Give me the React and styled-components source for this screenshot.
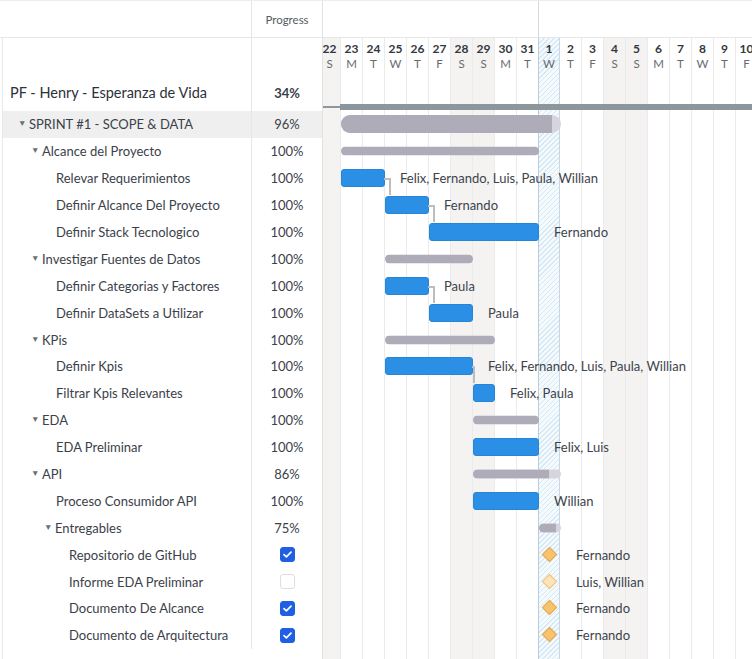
import React from 'react';
import styled, { createGlobalStyle } from 'styled-components';

const ROW_H = 26.9;
const TALL_H = 73;
const COL_W = 22;
const GRID_SHIFT = -4;

const GlobalStyle = createGlobalStyle`
  html, body { margin: 0; padding: 0; background: #fff; }
  body {
    font-family: Lato, "Open Sans", sans-serif;
    color: #3b4149;
    -webkit-font-smoothing: antialiased;
  }
`;

// day columns of the timeline: [number, letter, weekend, today]
const days = [
  [22, 'S', true], [23, 'M'], [24, 'T'], [25, 'W'], [26, 'T'], [27, 'F'],
  [28, 'S', true], [29, 'S', true], [30, 'M'], [31, 'T'], [1, 'W', false, true],
  [2, 'T'], [3, 'F'], [4, 'S', true], [5, 'S', true], [6, 'M'], [7, 'T'],
  [8, 'W'], [9, 'T'], [10, 'F'],
];

const dayX = d => d * COL_W + GRID_SHIFT;

const rows = [
  { name: 'SPRINT #1 - SCOPE & DATA', level: 1, group: true, pct: '96%', active: true,
    bar: { kind: 'sprint', from: 1, to: 11, done: 0.96 } },
  { name: 'Alcance del Proyecto', level: 2, group: true, pct: '100%',
    bar: { kind: 'summary', from: 1, to: 10, done: 1 } },
  { name: 'Relevar Requerimientos', level: 3, pct: '100%',
    bar: { kind: 'task', from: 1, to: 3, link: 6 }, label: 'Felix, Fernando, Luis, Paula, Willian' },
  { name: 'Definir Alcance Del Proyecto', level: 3, pct: '100%',
    bar: { kind: 'task', from: 3, to: 5, link: 6 }, label: 'Fernando' },
  { name: 'Definir Stack Tecnologico', level: 3, pct: '100%',
    bar: { kind: 'task', from: 5, to: 10 }, label: 'Fernando' },
  { name: 'Investigar Fuentes de Datos', level: 2, group: true, pct: '100%',
    bar: { kind: 'summary', from: 3, to: 7, done: 1 } },
  { name: 'Definir Categorias y Factores', level: 3, pct: '100%',
    bar: { kind: 'task', from: 3, to: 5, link: 6 }, label: 'Paula' },
  { name: 'Definir DataSets a Utilizar', level: 3, pct: '100%',
    bar: { kind: 'task', from: 5, to: 7 }, label: 'Paula' },
  { name: 'KPis', level: 2, group: true, pct: '100%',
    bar: { kind: 'summary', from: 3, to: 8, done: 1 } },
  { name: 'Definir Kpis', level: 3, pct: '100%',
    bar: { kind: 'task', from: 3, to: 7, link: 2 }, label: 'Felix, Fernando, Luis, Paula, Willian' },
  { name: 'Filtrar Kpis Relevantes', level: 3, pct: '100%',
    bar: { kind: 'task', from: 7, to: 8 }, label: 'Felix, Paula' },
  { name: 'EDA', level: 2, group: true, pct: '100%',
    bar: { kind: 'summary', from: 7, to: 10, done: 1 } },
  { name: 'EDA Preliminar', level: 3, pct: '100%',
    bar: { kind: 'task', from: 7, to: 10 }, label: 'Felix, Luis' },
  { name: 'API', level: 2, group: true, pct: '86%',
    bar: { kind: 'summary', from: 7, to: 11, done: 0.86 } },
  { name: 'Proceso Consumidor API', level: 3, pct: '100%',
    bar: { kind: 'task', from: 7, to: 10 }, label: 'Willian' },
  { name: 'Entregables', level: 3, group: true, pct: '75%',
    bar: { kind: 'summary', from: 10, to: 11, done: 0.75 } },
  { name: 'Repositorio de GitHub', level: 4, check: true,
    bar: { kind: 'milestone', from: 10, to: 11, done: 1 }, label: 'Fernando' },
  { name: 'Informe EDA Preliminar', level: 4, check: false,
    bar: { kind: 'milestone', from: 10, to: 11, done: 0 }, label: 'Luis, Willian' },
  { name: 'Documento De Alcance', level: 4, check: true,
    bar: { kind: 'milestone', from: 10, to: 11, done: 1 }, label: 'Fernando' },
  { name: 'Documento de Arquitectura', level: 4, check: true,
    bar: { kind: 'milestone', from: 10, to: 11, done: 1 }, label: 'Fernando' },
];

/* ---------- page ---------- */

const Page = styled.div`
  display: flex;
  width: 752px;
  height: 659px;
  overflow: hidden;
  border-top: 1px solid #ececec;
  box-sizing: border-box;
`;

/* ---------- left table ---------- */

const Table = styled.div`
  width: 323px;
  flex: none;
  display: flex;
  flex-direction: column;
  border-right: 1px solid #e2e2e2;
  box-sizing: border-box;
`;

const HeadRow = styled.div`
  display: grid;
  grid-template-columns: 252px 1fr;
  height: 36px;
  border-bottom: 1px solid #e6e6e6;
`;

const HeadCell = styled.div`
  display: flex;
  align-items: center;
  justify-content: center;
  font-size: 11.5px;
  color: #555b62;
  border-right: ${p => (p.$divider ? '1px solid #e6e6e6' : 'none')};
`;

const Body = styled.div`
  flex: 1;
  margin-left: 2px;
  border-left: 1px solid #e8e8e8;
`;

const Row = styled.div`
  display: grid;
  grid-template-columns: 249px 1fr;
  height: ${p => (p.$tall ? `${TALL_H}px` : `${ROW_H}px`)};
  background: ${p => (p.$active ? '#efefef' : 'transparent')};
  font-size: 13px;
`;

const NameCell = styled.div`
  display: flex;
  align-items: ${p => (p.$tall ? 'flex-end' : 'center')};
  padding-left: ${p => p.$indent}px;
  padding-bottom: ${p => (p.$tall ? '10px' : '0')};
  border-right: 1px solid #e6e6e6;
  white-space: nowrap;
  font-size: ${p => (p.$tall ? '14.5px' : '13px')};
  color: ${p => (p.$tall ? '#2c3138' : '#3b4149')};
`;

const Caret = styled.span`
  display: inline-block;
  width: 11px;
  font-size: 8.5px;
  color: #6b7077;
  transform: translateY(-1px);
`;

const PctCell = styled.div`
  display: flex;
  align-items: ${p => (p.$tall ? 'flex-end' : 'center')};
  justify-content: center;
  padding-bottom: ${p => (p.$tall ? '10px' : '0')};
  font-size: 13px;
  font-weight: ${p => (p.$tall ? 700 : 400)};
  color: #3b4149;
`;

const Check = styled.span`
  width: 15px;
  height: 15px;
  border-radius: 3px;
  box-sizing: border-box;
  display: flex;
  align-items: center;
  justify-content: center;
  background: ${p => (p.$on ? '#1e5fe4' : '#fff')};
  border: 1px solid ${p => (p.$on ? '#1e5fe4' : '#dedede')};
`;

/* ---------- gantt ---------- */

const Gantt = styled.div`
  flex: 1;
  display: flex;
  flex-direction: column;
  overflow: hidden;
`;

const MonthBar = styled.div`
  height: 36px;
  flex: none;
  border-bottom: 1px solid #e6e6e6;
  display: flex;
`;

const MonthCell = styled.div`
  width: ${p => p.$w}px;
  flex: none;
  border-right: 1px solid #d8d8d8;
  box-sizing: border-box;
`;

const Canvas = styled.div`
  position: relative;
  flex: 1;
`;

const DayGrid = styled.div`
  position: absolute;
  top: 0;
  bottom: 0;
  left: ${GRID_SHIFT}px;
  display: flex;
`;

const DayCol = styled.div`
  width: ${COL_W}px;
  flex: none;
  box-sizing: border-box;
  display: flex;
  flex-direction: column;
  align-items: center;
  padding-top: 3px;
  border-right: 1px solid ${p => (p.$today ? '#c7d7e4' : '#ebebeb')};
  border-left: ${p => (p.$today ? '1px solid #b9ccdc' : 'none')};
  margin-left: ${p => (p.$today ? '-1px' : '0')};
  background: ${p =>
    p.$today
      ? 'repeating-linear-gradient(135deg, #d6e8f5 0 1px, #f5fafd 1px 3.5px)'
      : p.$weekend
        ? '#f4f3f2'
        : '#fff'};
`;

const DayNum = styled.span`
  font-size: 12px;
  font-weight: 700;
  color: #33383e;
  line-height: 15px;
`;

const DayLetter = styled.span`
  font-size: 11.5px;
  color: #666b71;
  line-height: 15px;
`;

const Lanes = styled.div`
  position: relative;
  z-index: 1;
`;

const Lane = styled.div`
  position: relative;
  height: ${p => (p.$tall ? `${TALL_H}px` : `${ROW_H}px`)};
`;

const ProjectLead = styled.div`
  position: absolute;
  left: 0;
  width: 18px;
  top: 68px;
  height: 2px;
  background: #8d959d;
`;

const ProjectBar = styled.div`
  position: absolute;
  left: 17px;
  right: 0;
  top: 66px;
  height: 6px;
  background: #8d959d;
`;

const Track = styled.div`
  position: absolute;
  top: 50%;
  transform: translateY(-50%);
  height: ${p => (p.$kind === 'sprint' ? 18 : 9)}px;
  border-radius: ${p => (p.$kind === 'sprint' ? 9 : 5)}px;
  background: #d6d5dd;
  overflow: hidden;
`;

const Fill = styled.div`
  height: 100%;
  background: #adacb8;
`;

const TaskBar = styled.div`
  position: absolute;
  top: 50%;
  transform: translateY(-50%);
  height: 18px;
  border-radius: 3px;
  background: #2b8fe5;
  box-sizing: border-box;
  border: 1px solid #2585d8;
`;

const Link = styled.div`
  position: absolute;
  top: 50%;
  height: 17px;
  box-sizing: border-box;
  border-top: 2px solid #bdbdbd;
  border-right: 2px solid #bdbdbd;
`;

const Diamond = styled.div`
  position: absolute;
  top: 50%;
  width: 11px;
  height: 11px;
  margin-top: -6px;
  box-sizing: border-box;
  transform: rotate(45deg);
  background: ${p => (p.$done ? '#f6c470' : '#fde3b9')};
  border: 1px solid ${p => (p.$done ? '#e9a84d' : '#f2bf77')};
`;

const BarLabel = styled.span`
  position: absolute;
  top: 50%;
  transform: translateY(-50%);
  font-size: 13px;
  color: #3d434b;
  white-space: nowrap;
`;

function CheckMark() {
  return (
    <svg width="9" height="7" viewBox="0 0 9 7">
      <path d="M1 3.6 L3.4 5.8 L8 1.2" fill="none" stroke="#fff" strokeWidth="1.7" strokeLinecap="round" strokeLinejoin="round" />
    </svg>
  );
}

function TableRow({ row }) {
  const indent = row.group ? 2 + 13 * row.level : 14 + 13 * row.level;
  return (
    <Row $active={row.active}>
      <NameCell $indent={indent}>
        {row.group && <Caret>▼</Caret>}
        {row.name}
      </NameCell>
      <PctCell>
        {row.check === undefined ? row.pct : <Check $on={row.check}>{row.check && <CheckMark />}</Check>}
      </PctCell>
    </Row>
  );
}

function LaneBar({ bar, label }) {
  const left = dayX(bar.from);
  const right = dayX(bar.to);
  const width = right - left;

  if (bar.kind === 'milestone') {
    return (
      <>
        <Diamond $done={bar.done} style={{ left: left + 4.5 }} />
        <BarLabel style={{ left: right + 15 }}>{label}</BarLabel>
      </>
    );
  }
  if (bar.kind === 'task') {
    return (
      <>
        <TaskBar style={{ left, width }} />
        {bar.link && <Link style={{ left: right - 1, width: bar.link + 1 }} />}
        {label && <BarLabel style={{ left: right + 15 }}>{label}</BarLabel>}
      </>
    );
  }
  return (
    <Track $kind={bar.kind} style={{ left, width }}>
      <Fill style={{ width: `${bar.done * 100}%` }} />
    </Track>
  );
}

export default function App() {
  const todayLeft = dayX(10);
  return (
    <>
      <GlobalStyle />
      <Page>
        <Table>
          <HeadRow>
            <HeadCell $divider />
            <HeadCell>Progress</HeadCell>
          </HeadRow>
          <Body>
            <Row $tall>
              <NameCell $tall $indent={7}>PF - Henry - Esperanza de Vida</NameCell>
              <PctCell $tall>34%</PctCell>
            </Row>
            {rows.map(r => <TableRow key={r.name} row={r} />)}
          </Body>
        </Table>

        <Gantt>
          <MonthBar>
            <MonthCell $w={todayLeft} />
          </MonthBar>
          <Canvas>
            <DayGrid>
              {days.map(([n, l, weekend, today]) => (
                <DayCol key={n} $weekend={weekend} $today={today}>
                  <DayNum>{n}</DayNum>
                  <DayLetter>{l}</DayLetter>
                </DayCol>
              ))}
            </DayGrid>
            <Lanes>
              <Lane $tall>
                <ProjectLead />
                <ProjectBar />
              </Lane>
              {rows.map(r => (
                <Lane key={r.name}>
                  <LaneBar bar={r.bar} label={r.label} />
                </Lane>
              ))}
            </Lanes>
          </Canvas>
        </Gantt>
      </Page>
    </>
  );
}
